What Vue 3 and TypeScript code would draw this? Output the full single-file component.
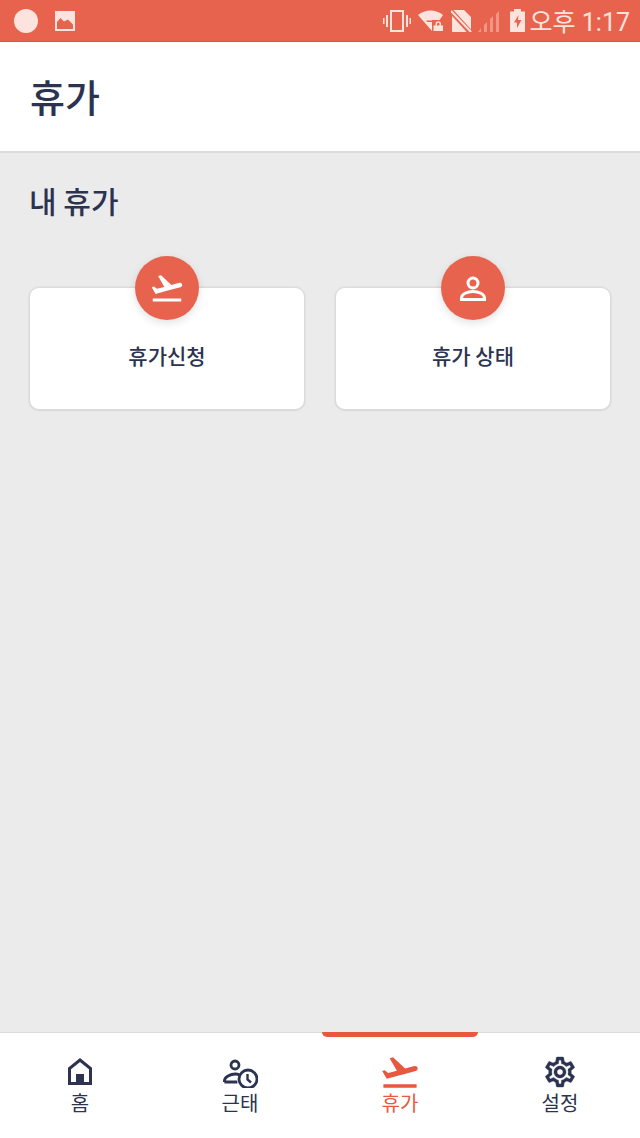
<template>
  <div class="page">
    <div class="status-bar">
      <div class="status-left">
        <span class="dot"></span>
        <svg class="pic" width="20" height="20" viewBox="0 0 20 20">
          <path fill="#fde3de" d="M0 0h20v20H0z" />
          <path fill="#e8634e" d="M2 18v-7l3.500-4 3.500 3.500 4-2 5 5V18z" />
        </svg>
      </div>
      <div class="status-right">
        <svg class="s-vib" width="28" height="22" viewBox="0 0 28 22">
          <path fill="#fde3de" fill-rule="evenodd" d="M7 0h14v22H7zM9 2v18h10V2zM3 5h2v12H3zM23 5h2v12h-2zM0 8h1.500v6H0zM26.500 8H28v6h-1.500z" />
        </svg>
        <svg class="s-wifi" width="26" height="21" viewBox="0 0 26 21">
          <path fill="#fde3de" d="M0 5C3.500 2 8 .5 12.500.5S21.500 2 25 5L14 21z" />
          <path fill="#e8634e" d="M8 10.500h7.500l-1.200 1.500H9.200z" />
          <path fill="#e8634e" d="M14 10h12v11H14z" />
          <path fill="#fde3de" d="M15.500 15.500h9.500V21h-9.500zM17.500 15.500V14a2.700 2.700 0 0 1 5.500 0v1.500h-1.500V14a1.200 1.200 0 0 0-2.500 0v1.500z" />
        </svg>
        <svg class="s-sim" width="21" height="22" viewBox="0 0 21 22">
          <path fill="#fde3de" d="M1 0h12l7 7v15H1z" />
          <path stroke="#e8634e" stroke-width="5" d="M-1 0l21 23" />
          <path stroke="#fde3de" stroke-width="2" d="M0 1l20 21" />
        </svg>
        <svg class="s-signal" width="23" height="22" viewBox="0 0 23 22">
          <path fill="#fde3de" opacity=".4" d="M0 22l3-4v4zM6 22v-7l3-3v10zM12 22V9l3-3v16zM18 22V4l3-3v21z" />
        </svg>
        <svg class="s-batt" width="15" height="23" viewBox="0 0 15 23">
          <path fill="#fde3de" d="M4 0h7v2.500h4V23H0V2.500h4z" />
          <path fill="#e8634e" d="M8.500 6L4 13.500h3V19l4.500-8H8z" />
        </svg>
        <span class="clock">오후 1:17</span>
      </div>
    </div>

    <header class="top-bar">
      <h1 class="top-title">휴가</h1>
    </header>

    <main class="content">
      <h2 class="section-title">내 휴가</h2>
      <div class="cards">
        <div v-for="card in cards" :key="card.label" class="card">
          <span class="card-icon">
            <svg v-if="card.icon === 'plane'" width="36" height="36" viewBox="0 0 24 24">
              <path fill="#fff" :d="planePath" />
            </svg>
            <svg v-else width="28" height="28" viewBox="0 0 28 28" fill="none" stroke="#fff" stroke-width="3">
              <circle cx="14" cy="9" r="5" />
              <path d="M2.500 25.500V24c0-4 6-6.500 11.500-6.500s11.500 2.500 11.500 6.500v1.500z" />
            </svg>
          </span>
          <span class="card-label">{{ card.label }}</span>
        </div>
      </div>
    </main>

    <nav class="bottom-nav">
      <div v-for="item in navItems" :key="item.label" class="nav-item" :class="{ active: item.active }">
        <span v-if="item.active" class="nav-indicator"></span>
        <span class="nav-icon">
          <svg v-if="item.icon === 'home'" width="26" height="28" viewBox="0 0 26 28">
            <path fill="none" stroke="#2b3350" stroke-width="3" d="M2.500 25.500V10.500L13 2l10.500 8.500v15z" />
            <path fill="#2b3350" d="M9 16h8v10H9z" />
          </svg>
          <svg v-else-if="item.icon === 'clock'" width="36" height="32" viewBox="0 0 36 32" fill="none" stroke="#2b3350" stroke-width="2.800">
            <circle cx="13" cy="9" r="4" />
            <path d="M2.400 26v-1c0-4 6-7 11-7 2 0 3 .3 4 .7M2.400 26h13" />
            <circle cx="26" cy="23" r="9" />
            <path d="M25.500 18v5.500l3.500 3" stroke-width="2.400" />
          </svg>
          <svg v-else-if="item.icon === 'plane'" width="42" height="42" viewBox="0 0 24 24">
            <path fill="#e8583f" :d="planePath" />
          </svg>
          <svg v-else width="36" height="36" viewBox="0 0 24 24">
            <path fill="#2b3350" stroke="#2b3350" stroke-width=".25" :d="gearPath" />
          </svg>
        </span>
        <span class="nav-label">{{ item.label }}</span>
      </div>
    </nav>
  </div>
</template>

<script setup lang="ts">
interface NavItem {
  label: string
  icon: 'home' | 'clock' | 'plane' | 'gear'
  active?: boolean
}

const planePath =
  'M2.500 19h19v2h-19zm19.570-9.360c-.21-.8-1.040-1.280-1.840-1.060L14.920 10l-6.900-6.430-1.930.51 4.140 7.170-4.970 1.330-1.970-1.540-1.450.39 1.820 3.160.77 1.330 1.600-.43 5.310-1.420 4.350-1.160L21 11.490c.81-.23 1.280-1.050 1.070-1.850z'

const gearPath =
  'M19.430 12.980c.04-.32.07-.64.07-.98 0-.34-.03-.66-.07-.98l2.110-1.650c.19-.15.24-.42.12-.64l-2-3.460c-.09-.16-.26-.25-.44-.25-.06 0-.12.01-.17.03l-2.490 1c-.52-.4-1.080-.73-1.690-.98l-.38-2.650C14.460 2.180 14.250 2 14 2h-4c-.25 0-.46.18-.49.42l-.38 2.650c-.61.25-1.170.59-1.690.98l-2.490-1c-.06-.02-.12-.03-.18-.03-.17 0-.34.09-.43.25l-2 3.460c-.13.22-.07.49.12.64l2.110 1.650c-.04.32-.07.65-.07.98 0 .33.03.66.07.98l-2.110 1.650c-.19.15-.24.42-.12.64l2 3.460c.09.16.26.25.44.25.06 0 .12-.01.17-.03l2.490-1c.52.4 1.080.73 1.690.98l.38 2.650c.03.24.24.42.49.42h4c.25 0 .46-.18.49-.42l.38-2.650c.61-.25 1.170-.59 1.690-.98l2.490 1c.06.02.12.03.18.03.17 0 .34-.09.43-.25l2-3.460c.12-.22.07-.49-.12-.64l-2.110-1.650zm-1.980-1.710c.04.31.05.52.05.73 0 .21-.02.43-.05.73l-.14 1.130.89.7 1.080.84-.7 1.210-1.270-.51-1.040-.42-.9.68c-.43.32-.84.56-1.250.73l-1.060.43-.16 1.130-.2 1.350h-1.400l-.19-1.350-.16-1.130-1.060-.43c-.43-.18-.83-.41-1.230-.71l-.91-.7-1.060.43-1.270.51-.7-1.210 1.080-.84.89-.7-.14-1.130c-.03-.31-.05-.54-.05-.74s.02-.43.05-.73l.14-1.130-.89-.7-1.080-.84.7-1.210 1.270.51 1.040.42.9-.68c.43-.32.84-.56 1.250-.73l1.060-.43.16-1.130.2-1.350h1.390l.19 1.350.16 1.130 1.060.43c.43.18.83.41 1.230.71l.91.7 1.060-.43 1.270-.51.7 1.210-1.070.85-.89.7.14 1.130zM12 8c-2.210 0-4 1.790-4 4s1.790 4 4 4 4-1.790 4-4-1.790-4-4-4zm0 6c-1.100 0-2-.9-2-2s.9-2 2-2 2 .9 2 2-.9 2-2 2z'

const cards: { label: string; icon: 'plane' | 'person' }[] = [
  { label: '휴가신청', icon: 'plane' },
  { label: '휴가 상태', icon: 'person' }
]

const navItems: NavItem[] = [
  { label: '홈', icon: 'home' },
  { label: '근태', icon: 'clock' },
  { label: '휴가', icon: 'plane', active: true },
  { label: '설정', icon: 'gear' }
]
</script>

<style>
html,
body {
  margin: 0;
  padding: 0;
}
</style>

<style scoped>
.page {
  display: flex;
  flex-direction: column;
  width: 640px;
  height: 1138px;
  overflow: hidden;
  background: #ebebeb;
  color: #2b3350;
  font-family: "Noto Sans CJK KR", "Noto Sans", sans-serif;
}

.status-bar {
  display: flex;
  flex: none;
  align-items: center;
  justify-content: space-between;
  box-sizing: border-box;
  height: 42px;
  padding: 0 10px 0 14px;
  background: #e8634e;
  border-bottom: 1px solid #dc5541;
}

.status-left,
.status-right {
  display: flex;
  align-items: center;
}

.dot {
  width: 24px;
  height: 24px;
  border-radius: 50%;
  background: #fde3de;
}

.pic {
  margin-left: 17px;
}

.s-wifi {
  margin-left: 7px;
}

.s-sim {
  margin-left: 7px;
}

.s-signal {
  margin-left: 6px;
}

.s-batt {
  margin-left: 9px;
}

.clock {
  margin-left: 5px;
  padding-top: 3px;
  color: #fde3de;
  font-family: Roboto, "Noto Sans CJK KR", sans-serif;
  font-size: 25px;
  line-height: 37px;
  white-space: nowrap;
}

.top-bar {
  display: flex;
  flex: none;
  align-items: center;
  box-sizing: border-box;
  height: 111px;
  padding: 0 30px 2px;
  background: #fff;
  border-bottom: 2px solid #dcdcdc;
}

.top-title {
  margin: 0;
  font-size: 38px;
  font-weight: 500;
  line-height: 1;
}

.content {
  flex: 1;
  padding: 29px 29px 0;
}

.section-title {
  margin: 0;
  font-size: 30px;
  font-weight: 500;
  line-height: 36px;
}

.cards {
  display: grid;
  grid-template-columns: 276px 276px;
  gap: 30px;
  margin-top: 69px;
}

.card {
  position: relative;
  display: flex;
  align-items: center;
  justify-content: center;
  box-sizing: border-box;
  height: 123px;
  background: #fff;
  border: 1px solid #dcdcdc;
  border-radius: 10px;
  box-shadow: 0 0 0 1px rgba(0, 0, 0, 0.03), 0 1px 2px rgba(0, 0, 0, 0.05);
}

.card-icon {
  position: absolute;
  top: -32px;
  left: 50%;
  display: flex;
  align-items: center;
  justify-content: center;
  width: 64px;
  height: 64px;
  margin-left: -32px;
  border-radius: 50%;
  background: #e8634e;
  box-shadow: 0 3px 8px rgba(0, 0, 0, 0.12);
}

.card-label {
  margin-top: 14px;
  font-size: 21px;
  font-weight: 500;
  line-height: 1.3;
}

.bottom-nav {
  display: flex;
  flex: none;
  box-sizing: border-box;
  height: 106px;
  background: #fff;
  border-top: 1px solid #dcdcdc;
}

.nav-item {
  position: relative;
  display: flex;
  flex: 1;
  flex-direction: column;
  align-items: center;
  padding-top: 22px;
}

.nav-item.active {
  color: #e8583f;
}

.nav-indicator {
  position: absolute;
  top: -1px;
  left: 2px;
  width: 156px;
  height: 5px;
  border-radius: 0 0 5px 5px;
  background: #e8583f;
}

.nav-icon {
  display: flex;
  align-items: center;
  justify-content: center;
  height: 34px;
}

.nav-label {
  margin-top: 0;
  font-size: 20px;
  line-height: 28px;
}
</style>
